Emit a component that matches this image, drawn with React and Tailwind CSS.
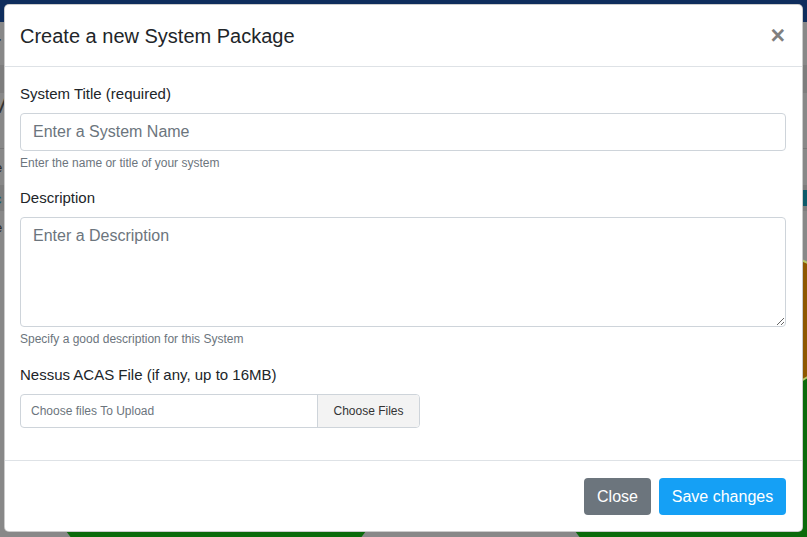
import React from "react";

const Field = ({label, help, children}) => (
    <div className="mb-4">
        <label className="mb-2 block text-[15px] leading-[22px] text-[#212529]">
            {label}
        </label>
        {children}
        {help && (
            <p className="mt-1 pt-[1px] text-[12px] leading-[15px] text-[#6c757d]">
                {help}
            </p>
        )}
    </div>
);

const PieChart = ({slices}) => (
    <svg width="366" height="366" viewBox="0 0 366 366" className="shrink-0">
        <circle cx="183" cy="183" r="183" fill="#0b6a0b" />
        {slices}
    </svg>
);

const Background = () => (
    <div className="flex h-full flex-col bg-[#888888]">
        <div className="h-[22px] shrink-0 bg-[#0f2d5d]" />
        <div className="flex h-[43px] shrink-0 items-center">
            <span className="-ml-[7px] text-[24px] leading-none text-[#2a2a2a]">r</span>
        </div>
        <div className="h-[28px] shrink-0 bg-[#7d7d7d]" />
        <div className="flex h-[56px] shrink-0 items-start border-b border-[#777]">
            <span className="-ml-[8px] text-[22px] leading-[26px] text-[#333]">V</span>
        </div>
        <div className="flex h-[36px] shrink-0 items-center">
            <span className="-ml-[5px] text-[13px] leading-none text-[#2a2a2a]">e</span>
        </div>
        <div className="flex h-[26px] shrink-0 items-center bg-[#7d7d7d]">
            <span className="-ml-[6px] text-[15px] leading-none text-[#0c5a6a]">c</span>
            <div className="ml-auto h-[16px] w-[4px] bg-[#0c5a6a]" />
        </div>
        <div className="flex h-[32px] shrink-0 items-center">
            <span className="-ml-[5px] text-[13px] leading-none text-[#2a2a2a]">e</span>
        </div>
        <div className="flex shrink-0 gap-[143px] pl-[33px]">
            <PieChart />
            <PieChart
                slices={
                    <path
                        d="M183 183 L183 0 A183 183 0 0 1 340 90 Z"
                        fill="#8e5800"
                        stroke="#b5c86a"
                        strokeWidth="2"
                    />
                }
            />
        </div>
    </div>
);

const App = () => {
    return (
        <div className="relative h-[537px] w-[807px] overflow-hidden font-['Liberation_Sans',Arial,sans-serif]">
            <Background />
            <div className="absolute inset-0 px-[4px] pt-[4px]">
                <div className="flex flex-col overflow-hidden rounded-[5px] border border-black/20 bg-white">
                    <div className="flex h-[62px] items-center justify-between border-b border-[#dee2e6] pr-4 pl-[15px]">
                        <h5 className="text-[20px] leading-[30px] font-medium text-[#212529]">
                            Create a new System Package
                        </h5>
                        <button className="mr-[1px] text-[25px] leading-none font-bold text-black/50">
                            ×
                        </button>
                    </div>
                    <div className="pt-4 pr-4 pb-4 pl-[15px]">
                        <Field
                            label="System Title (required)"
                            help="Enter the name or title of your system"
                        >
                            <input
                                type="text"
                                placeholder="Enter a System Name"
                                className="block h-[38px] w-full rounded border border-[#ced4da] px-3 text-base text-[#495057] placeholder:text-[#6c757d] outline-none"
                            />
                        </Field>
                        <Field
                            label="Description"
                            help="Specify a good description for this System"
                        >
                            <textarea
                                rows={4}
                                placeholder="Enter a Description"
                                className="block h-[110px] w-full resize-y rounded border border-[#ced4da] px-3 py-[6px] text-base leading-6 text-[#495057] placeholder:text-[#6c757d] outline-none"
                            />
                        </Field>
                        <div className="mb-4 pt-[1px]">
                            <label className="mb-2 block text-[15px] leading-[22px] text-[#212529]">
                                Nessus ACAS File (if any, up to 16MB)
                            </label>
                            <div className="flex h-[34px] w-[400px] overflow-hidden rounded border border-[#ced4da] text-[12px]">
                                <span className="flex flex-1 items-center px-[10px] text-[#6c757d]">
                                    Choose files To Upload
                                </span>
                                <span className="flex w-[102px] items-center justify-center border-l border-[#ced4da] bg-[#f3f3f3] text-[#333]">
                                    Choose Files
                                </span>
                            </div>
                        </div>
                    </div>
                    <div className="flex justify-end gap-2 border-t border-[#dee2e6] px-4 pt-[17px] pb-4">
                        <button className="h-[37px] w-[67px] rounded bg-[#6c757d] text-base text-white">
                            Close
                        </button>
                        <button className="h-[37px] w-[127px] rounded bg-[#15a0f5] text-base text-white">
                            Save changes
                        </button>
                    </div>
                </div>
            </div>
        </div>
    );
};

export default App;
